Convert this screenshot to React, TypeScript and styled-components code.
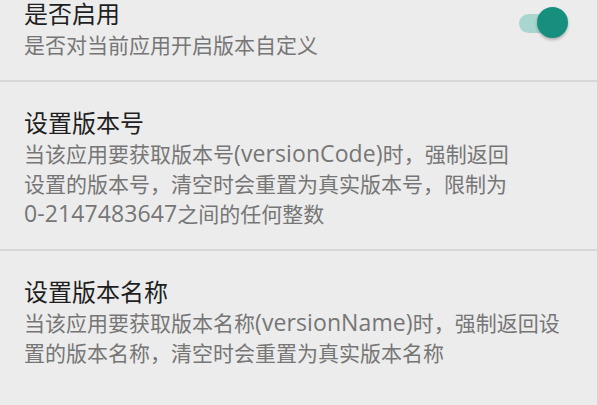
import React from "react";
import styled, { createGlobalStyle } from "styled-components";

const GlobalStyle = createGlobalStyle`
  html, body {
    margin: 0;
    padding: 0;
    background: #ececec;
    overflow: hidden;
  }
  body {
    font-family: "Noto Sans CJK SC", "Open Sans", sans-serif;
    -webkit-font-smoothing: antialiased;
  }
`;

const Screen = styled.div`
  width: 597px;
  height: 405px;
  overflow: hidden;
  background: #ececec;
`;

const List = styled.div`
  display: flex;
  flex-direction: column;
  margin-top: -27px;
`;

const Item = styled.div<{ $last?: boolean }>`
  display: flex;
  align-items: flex-start;
  gap: 16px;
  padding: 28px 29px 21px 24px;
  border-bottom: ${(p) => (p.$last ? "none" : "2px solid #d7d7d7")};
`;

const Texts = styled.div`
  flex: 1;
  display: flex;
  flex-direction: column;
  gap: 4px;
  min-width: 0;
`;

const Title = styled.div`
  font-size: 24px;
  line-height: 24px;
  color: #1f1f1f;
  white-space: nowrap;
`;

const Summary = styled.div`
  display: flex;
  flex-direction: column;
  font-size: 21px;
  line-height: 30px;
  color: #767676;
`;

const Line = styled.span`
  white-space: nowrap;
`;

const Latin = styled.span`
  font-family: "Open Sans", "Noto Sans", sans-serif;
  font-size: 23px;
  letter-spacing: 0.1px;
`;

const Switch = styled.div`
  position: relative;
  width: 49px;
  height: 33px;
  flex: none;
  margin-top: 6px;
`;

const Track = styled.div`
  position: absolute;
  left: 0;
  top: 7px;
  width: 42px;
  height: 19px;
  border-radius: 10px;
  background: #a9d6ce;
`;

const Thumb = styled.div`
  position: absolute;
  right: 0;
  top: 0;
  width: 31px;
  height: 31px;
  border-radius: 50%;
  background: #178f7e;
  box-shadow: 0 2px 3px rgba(0, 0, 0, 0.25);
`;

type Pref = { title: string; lines: string[]; toggle?: boolean };

const prefs: Pref[] = [
  { title: "是否启用", lines: ["是否对当前应用开启版本自定义"], toggle: true },
  {
    title: "设置版本号",
    lines: [
      "当该应用要获取版本号(versionCode)时，强制返回",
      "设置的版本号，清空时会重置为真实版本号，限制为",
      "0-2147483647之间的任何整数",
    ],
  },
  {
    title: "设置版本名称",
    lines: [
      "当该应用要获取版本名称(versionName)时，强制返回设",
      "置的版本名称，清空时会重置为真实版本名称",
    ],
  },
];

function MixedText({ text }: { text: string }) {
  const parts = text.split(/([\x20-\x7e]+)/).filter((s) => s.length > 0);
  return (
    <>
      {parts.map((s, i) =>
        /^[\x20-\x7e]+$/.test(s) ? (
          <Latin key={i}>{s}</Latin>
        ) : (
          <React.Fragment key={i}>{s}</React.Fragment>
        )
      )}
    </>
  );
}

export default function App() {
  return (
    <Screen>
      <GlobalStyle />
      <List>
        {prefs.map((p, i) => (
          <Item key={p.title} $last={i === prefs.length - 1}>
            <Texts>
              <Title>{p.title}</Title>
              <Summary>
                {p.lines.map((l) => (
                  <Line key={l}>
                    <MixedText text={l} />
                  </Line>
                ))}
              </Summary>
            </Texts>
            {p.toggle && (
              <Switch>
                <Track />
                <Thumb />
              </Switch>
            )}
          </Item>
        ))}
      </List>
    </Screen>
  );
}
